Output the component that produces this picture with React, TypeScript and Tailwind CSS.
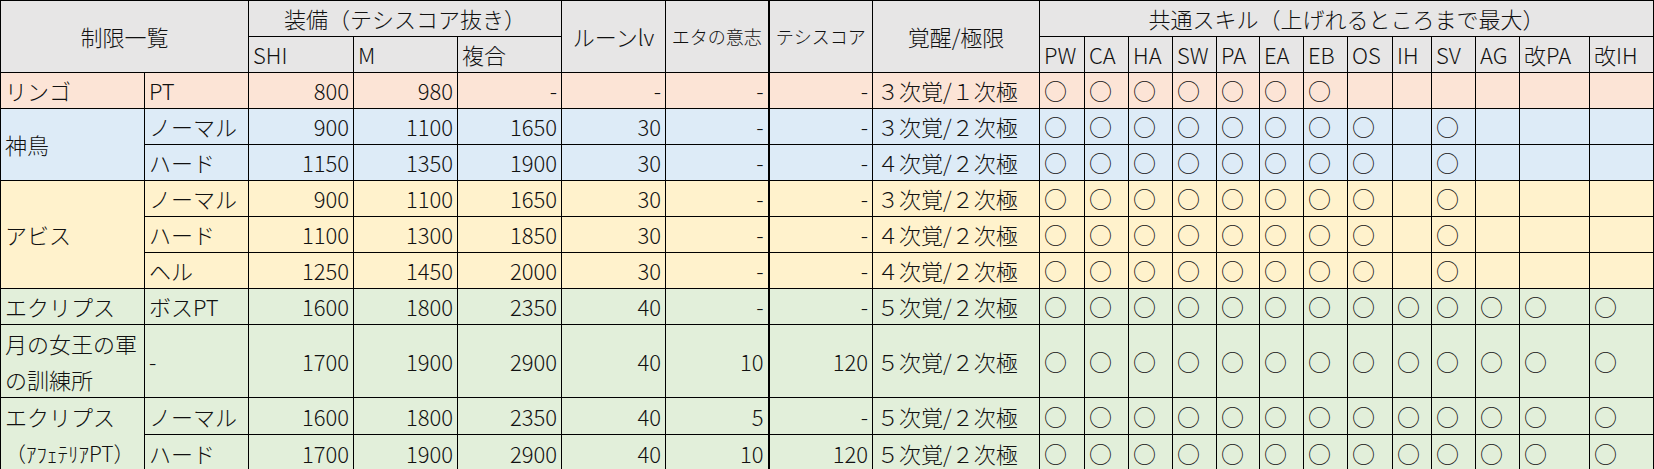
import type { ReactNode } from 'react';

type Row = {
  group?: { label: ReactNode; span: number; tall?: boolean };
  sub: string;
  shi: string;
  m: string;
  fuku: string;
  rune: string;
  eta: string;
  tesis: string;
  kaku: string;
  skills: number[];
  bg: string;
  tall?: boolean;
};

const skillNames = ['PW', 'CA', 'HA', 'SW', 'PA', 'EA', 'EB', 'OS', 'IH', 'SV', 'AG', '改PA', '改IH'];

const ringo = [1, 1, 1, 1, 1, 1, 1, 0, 0, 0, 0, 0, 0];
const mid = [1, 1, 1, 1, 1, 1, 1, 1, 0, 1, 0, 0, 0];
const all = [1, 1, 1, 1, 1, 1, 1, 1, 1, 1, 1, 1, 1];

const peach = 'bg-[#fce4d6]';
const blue = 'bg-[#ddebf7]';
const yellow = 'bg-[#fff2cc]';
const green = 'bg-[#e2efda]';

const rows: Row[] = [
  { group: { label: 'リンゴ', span: 1 }, sub: 'PT', shi: '800', m: '980', fuku: '-', rune: '-', eta: '-', tesis: '-', kaku: '３次覚/１次極', skills: ringo, bg: peach },
  { group: { label: '神鳥', span: 2 }, sub: 'ノーマル', shi: '900', m: '1100', fuku: '1650', rune: '30', eta: '-', tesis: '-', kaku: '３次覚/２次極', skills: mid, bg: blue },
  { sub: 'ハード', shi: '1150', m: '1350', fuku: '1900', rune: '30', eta: '-', tesis: '-', kaku: '４次覚/２次極', skills: mid, bg: blue },
  { group: { label: 'アビス', span: 3 }, sub: 'ノーマル', shi: '900', m: '1100', fuku: '1650', rune: '30', eta: '-', tesis: '-', kaku: '３次覚/２次極', skills: mid, bg: yellow },
  { sub: 'ハード', shi: '1100', m: '1300', fuku: '1850', rune: '30', eta: '-', tesis: '-', kaku: '４次覚/２次極', skills: mid, bg: yellow },
  { sub: 'ヘル', shi: '1250', m: '1450', fuku: '2000', rune: '30', eta: '-', tesis: '-', kaku: '４次覚/２次極', skills: mid, bg: yellow },
  { group: { label: 'エクリプス', span: 1 }, sub: 'ボスPT', shi: '1600', m: '1800', fuku: '2350', rune: '40', eta: '-', tesis: '-', kaku: '５次覚/２次極', skills: all, bg: green },
  {
    group: { label: <>月の女王の軍<br />の訓練所</>, span: 1, tall: true },
    sub: '-', shi: '1700', m: '1900', fuku: '2900', rune: '40', eta: '10', tesis: '120', kaku: '５次覚/２次極', skills: all, bg: green, tall: true,
  },
  {
    group: { label: <>エクリプス<br /><span className="text-[21px]">（ｱﾌｪﾃﾘｱPT）</span></>, span: 2, tall: true },
    sub: 'ノーマル', shi: '1600', m: '1800', fuku: '2350', rune: '40', eta: '5', tesis: '-', kaku: '５次覚/２次極', skills: all, bg: green,
  },
  { sub: 'ハード', shi: '1700', m: '1900', fuku: '2900', rune: '40', eta: '10', tesis: '120', kaku: '５次覚/２次極', skills: all, bg: green },
];

const cell = 'border border-black px-[4px] py-0 whitespace-nowrap overflow-hidden';
const head = 'border border-black px-[4px] py-0 font-light whitespace-nowrap overflow-hidden bg-[#e7e6e6]';

export default function App() {
  return (
    <div className="w-[1654px] h-[469px] bg-white overflow-hidden">
      <table className="table-fixed border-collapse w-[1654px] text-[22px] font-light text-[#111] font-['Noto_Sans_CJK_JP','Noto_Sans',sans-serif]">
        <colgroup>
          {/* 制限一覧 */}
          <col className="w-[144px]" />
          <col className="w-[104px]" />
          {/* 装備 */}
          <col className="w-[105px]" />
          <col className="w-[104px]" />
          <col className="w-[104px]" />
          {/* ルーン / エタ / テシス / 覚醒 */}
          <col className="w-[104px]" />
          <col className="w-[103px]" />
          <col className="w-[104px]" />
          <col className="w-[167px]" />
          {/* 共通スキル */}
          <col className="w-[45px]" />
          <col className="w-[44px]" />
          <col className="w-[44px]" />
          <col className="w-[44px]" />
          <col className="w-[43px]" />
          <col className="w-[44px]" />
          <col className="w-[44px]" />
          <col className="w-[45px]" />
          <col className="w-[39px]" />
          <col className="w-[44px]" />
          <col className="w-[44px]" />
          <col className="w-[70px]" />
          <col className="w-[64px]" />
        </colgroup>
        <thead>
          <tr className="h-[36px]">
            <th colSpan={2} rowSpan={2} className={`${head} text-center`}>制限一覧</th>
            <th colSpan={3} className={`${head} text-center`}>装備（テシスコア抜き）</th>
            <th rowSpan={2} className={`${head} text-center`}>ルーンlv</th>
            <th rowSpan={2} className={`${head} text-center text-[18px] border-r-2`}>エタの意志</th>
            <th rowSpan={2} className={`${head} text-center text-[18px]`}>テシスコア</th>
            <th rowSpan={2} className={`${head} text-center`}>覚醒/極限</th>
            <th colSpan={13} className={`${head} text-center`}>共通スキル（上げれるところまで最大）</th>
          </tr>
          <tr className="h-[36px]">
            <th className={`${head} text-left`}>SHI</th>
            <th className={`${head} text-left`}>M</th>
            <th className={`${head} text-left`}>複合</th>
            {skillNames.map((s) => (
              <th key={s} className={`${head} text-left px-[3px]`}>{s}</th>
            ))}
          </tr>
        </thead>
        <tbody>
          {rows.map((r, i) => (
            <tr key={i} className={r.tall ? 'h-[72px]' : 'h-[36px]'}>
              {r.group && (
                <td rowSpan={r.group.span} className={`${cell} ${r.bg} text-left ${r.group.tall ? 'leading-[36px]' : ''}`}>
                  {r.group.label}
                </td>
              )}
              <td className={`${cell} ${r.bg} text-left`}>{r.sub}</td>
              <td className={`${cell} ${r.bg} text-right`}>{r.shi}</td>
              <td className={`${cell} ${r.bg} text-right`}>{r.m}</td>
              <td className={`${cell} ${r.bg} text-right`}>{r.fuku}</td>
              <td className={`${cell} ${r.bg} text-right`}>{r.rune}</td>
              <td className={`${cell} ${r.bg} text-right border-r-2`}>{r.eta}</td>
              <td className={`${cell} ${r.bg} text-right`}>{r.tesis}</td>
              <td className={`${cell} ${r.bg} text-left`}>{r.kaku}</td>
              {r.skills.map((on, j) => (
                <td key={j} className={`${cell} ${r.bg} text-left px-[3px] text-[23px]`}>{on ? '○' : ''}</td>
              ))}
            </tr>
          ))}
        </tbody>
      </table>
    </div>
  );
}
